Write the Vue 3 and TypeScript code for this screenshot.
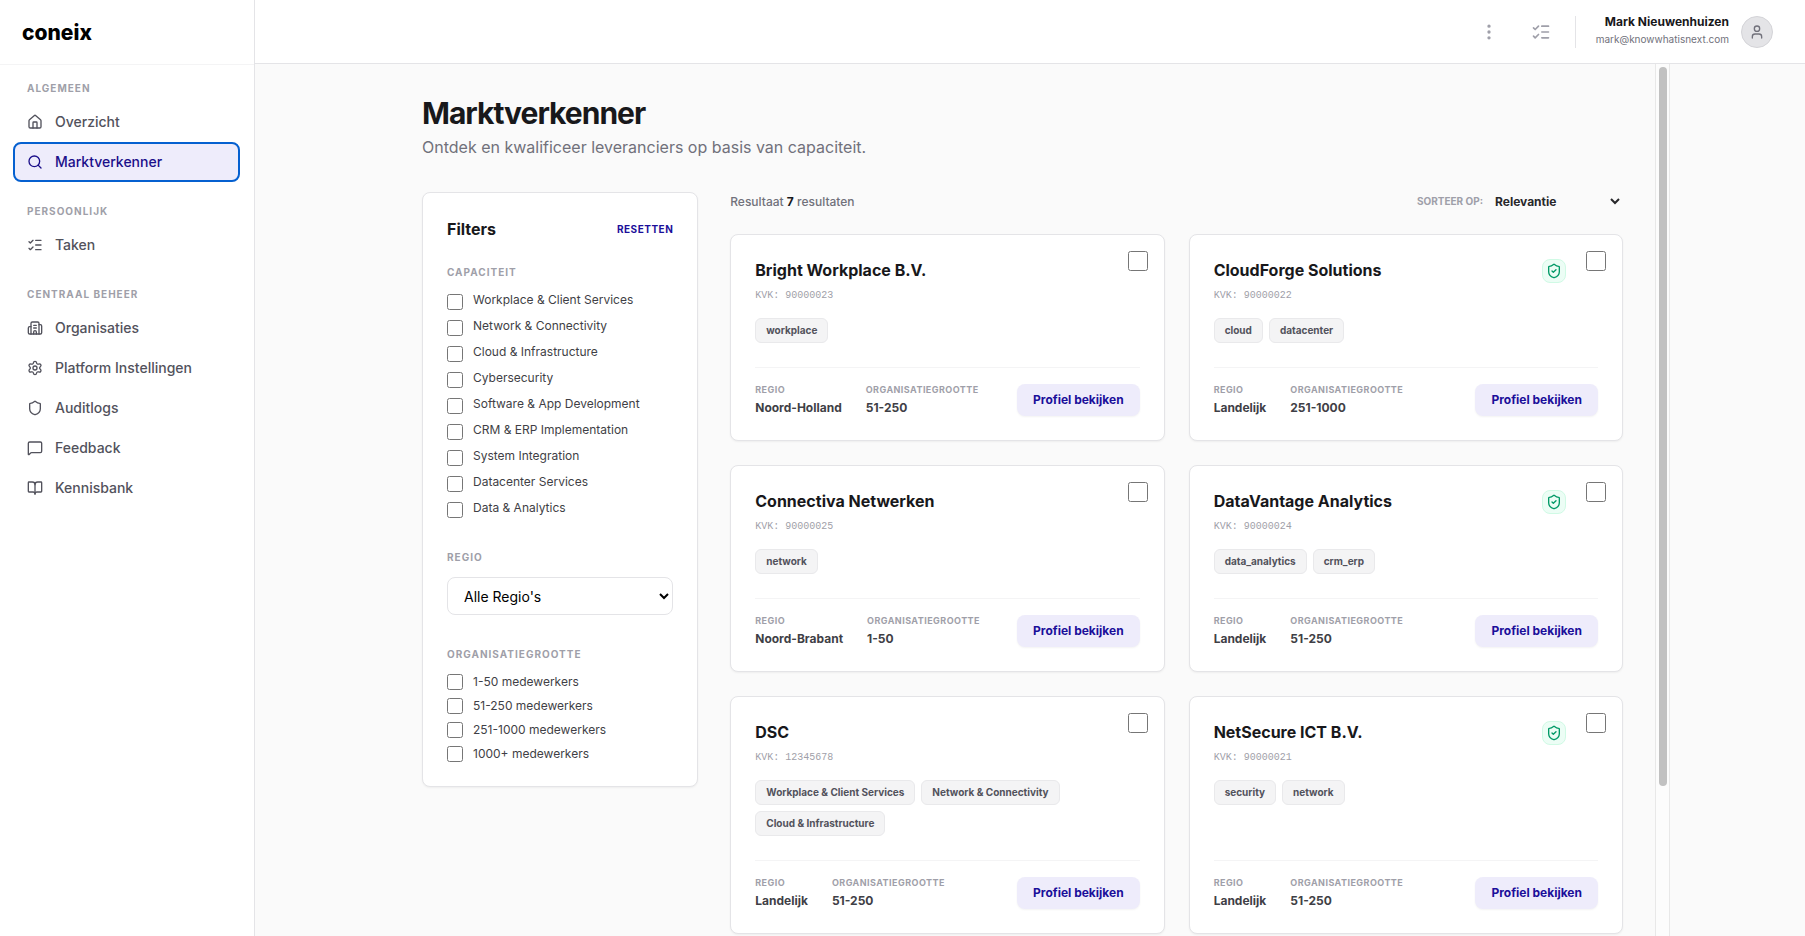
<script setup lang="ts">
import { ref } from 'vue'

type IconName =
  | 'home' | 'search' | 'tasks' | 'building' | 'settings' | 'shield'
  | 'message' | 'book' | 'user' | 'dots' | 'verified'

const shieldPath =
  'M20 13c0 5-3.5 7.5-7.66 8.95a1 1 0 0 1-.67-.01C7.5 20.5 4 18 4 13V6a1 1 0 0 1 1-1c2 0 4.5-1.2 6.24-2.72a1.17 1.17 0 0 1 1.52 0C14.51 3.81 17 5 19 5a1 1 0 0 1 1 1z'

const icons: Record<IconName, string[]> = {
  home: [
    'M15 21v-8a1 1 0 0 0-1-1h-4a1 1 0 0 0-1 1v8',
    'M3 10a2 2 0 0 1 .709-1.528l7-6a2 2 0 0 1 2.582 0l7 6A2 2 0 0 1 21 10v9a2 2 0 0 1-2 2H5a2 2 0 0 1-2-2z',
  ],
  search: ['M19 11a8 8 0 1 1-16 0a8 8 0 1 1 16 0', 'm21 21-4.34-4.34'],
  tasks: ['M13 5h8', 'M13 12h8', 'M13 19h8', 'm3 17 2 2 4-4', 'm3 7 2 2 4-4'],
  building: [
    'M10 12h4',
    'M10 8h4',
    'M14 21v-3a2 2 0 0 0-4 0v3',
    'M6 10H4a2 2 0 0 0-2 2v7a2 2 0 0 0 2 2h16a2 2 0 0 0 2-2V9a2 2 0 0 0-2-2h-2',
    'M6 21V5a2 2 0 0 1 2-2h8a2 2 0 0 1 2 2v16',
  ],
  settings: [
    'M9.671 4.136a2.34 2.34 0 0 1 4.659 0 2.34 2.34 0 0 0 3.319 1.915 2.34 2.34 0 0 1 2.33 4.033 2.34 2.34 0 0 0 0 3.831 2.34 2.34 0 0 1-2.33 4.033 2.34 2.34 0 0 0-3.319 1.915 2.34 2.34 0 0 1-4.659 0 2.34 2.34 0 0 0-3.32-1.915 2.34 2.34 0 0 1-2.33-4.033 2.34 2.34 0 0 0 0-3.831A2.34 2.34 0 0 1 6.35 6.051a2.34 2.34 0 0 0 3.319-1.915',
    'M15 12a3 3 0 1 1-6 0a3 3 0 1 1 6 0',
  ],
  shield: [shieldPath],
  verified: [shieldPath, 'm9 12 2 2 4-4'],
  message: [
    'M22 17a2 2 0 0 1-2 2H6.828a2 2 0 0 0-1.414.586l-2.202 2.202A.71.71 0 0 1 2 21.286V5a2 2 0 0 1 2-2h16a2 2 0 0 1 2 2z',
  ],
  book: [
    'M12 7v14',
    'M3 18a1 1 0 0 1-1-1V4a1 1 0 0 1 1-1h5a4 4 0 0 1 4 4 4 4 0 0 1 4-4h5a1 1 0 0 1 1 1v13a1 1 0 0 1-1 1h-6a3 3 0 0 0-3 3 3 3 0 0 0-3-3z',
  ],
  user: ['M19 21v-2a4 4 0 0 0-4-4H9a4 4 0 0 0-4 4v2', 'M16 7a4 4 0 1 1-8 0a4 4 0 1 1 8 0'],
  dots: [
    'M13 5a1 1 0 1 1-2 0a1 1 0 1 1 2 0',
    'M13 12a1 1 0 1 1-2 0a1 1 0 1 1 2 0',
    'M13 19a1 1 0 1 1-2 0a1 1 0 1 1 2 0',
  ],
}

interface NavItem { label: string; icon: IconName }
const navGroups: { title: string; items: NavItem[] }[] = [
  {
    title: 'Algemeen',
    items: [
      { label: 'Overzicht', icon: 'home' },
      { label: 'Marktverkenner', icon: 'search' },
    ],
  },
  { title: 'Persoonlijk', items: [{ label: 'Taken', icon: 'tasks' }] },
  {
    title: 'Centraal beheer',
    items: [
      { label: 'Organisaties', icon: 'building' },
      { label: 'Platform Instellingen', icon: 'settings' },
      { label: 'Auditlogs', icon: 'shield' },
      { label: 'Feedback', icon: 'message' },
      { label: 'Kennisbank', icon: 'book' },
    ],
  },
]
const activeItem = ref('Marktverkenner')

const capabilities = [
  'Workplace & Client Services',
  'Network & Connectivity',
  'Cloud & Infrastructure',
  'Cybersecurity',
  'Software & App Development',
  'CRM & ERP Implementation',
  'System Integration',
  'Datacenter Services',
  'Data & Analytics',
]
const sizes = ['1-50', '51-250', '251-1000', '1000+']

const selectedCapabilities = ref<string[]>([])
const selectedSizes = ref<string[]>([])
const selectedSuppliers = ref<string[]>([])
const total = 7

function resetFilters() {
  selectedCapabilities.value = []
  selectedSizes.value = []
}

interface Supplier {
  name: string
  kvk: string
  verified: boolean
  tags: string[]
  region: string
  size: string
}
const suppliers: Supplier[] = [
  { name: 'Bright Workplace B.V.', kvk: '90000023', verified: false, tags: ['workplace'], region: 'Noord-Holland', size: '51-250' },
  { name: 'CloudForge Solutions', kvk: '90000022', verified: true, tags: ['cloud', 'datacenter'], region: 'Landelijk', size: '251-1000' },
  { name: 'Connectiva Netwerken', kvk: '90000025', verified: false, tags: ['network'], region: 'Noord-Brabant', size: '1-50' },
  { name: 'DataVantage Analytics', kvk: '90000024', verified: true, tags: ['data_analytics', 'crm_erp'], region: 'Landelijk', size: '51-250' },
  { name: 'DSC', kvk: '12345678', verified: false, tags: ['Workplace & Client Services', 'Network & Connectivity', 'Cloud & Infrastructure'], region: 'Landelijk', size: '51-250' },
  { name: 'NetSecure ICT B.V.', kvk: '90000021', verified: true, tags: ['security', 'network'], region: 'Landelijk', size: '51-250' },
]
</script>

<template>
  <div class="app">
    <aside class="sidebar">
      <div class="brand">coneix</div>
      <nav class="nav">
        <section v-for="group in navGroups" :key="group.title" class="nav-group">
          <h2 class="eyebrow nav-title">{{ group.title }}</h2>
          <a
            v-for="item in group.items"
            :key="item.label"
            href="#"
            class="nav-item"
            :class="{ active: item.label === activeItem }"
            @click.prevent="activeItem = item.label"
          >
            <svg class="icon" viewBox="0 0 24 24" aria-hidden="true">
              <path v-for="d in icons[item.icon]" :key="d" :d="d" />
            </svg>
            <span>{{ item.label }}</span>
          </a>
        </section>
      </nav>
    </aside>

    <div class="main">
      <header class="topbar">
        <button class="icon-button" aria-label="Meer">
          <svg class="icon large" viewBox="0 0 24 24"><path v-for="d in icons.dots" :key="d" :d="d" /></svg>
        </button>
        <button class="icon-button" aria-label="Taken">
          <svg class="icon large" viewBox="0 0 24 24"><path v-for="d in icons.tasks" :key="d" :d="d" /></svg>
        </button>
        <div class="profile">
          <div class="profile-text">
            <strong>Mark Nieuwenhuizen</strong>
            <span>mark@knowwhatisnext.com</span>
          </div>
          <span class="avatar">
            <svg class="icon" viewBox="0 0 24 24"><path v-for="d in icons.user" :key="d" :d="d" /></svg>
          </span>
        </div>
      </header>

      <div class="viewport">
        <main class="page">
          <h1>Marktverkenner</h1>
          <p class="subtitle">Ontdek en kwalificeer leveranciers op basis van capaciteit.</p>

          <div class="columns">
            <form class="panel filters" @submit.prevent>
              <div class="filters-head">
                <h2>Filters</h2>
                <button type="button" class="reset" @click="resetFilters">Resetten</button>
              </div>
              <fieldset>
                <legend class="eyebrow">Capaciteit</legend>
                <label v-for="c in capabilities" :key="c" class="check offset">
                  <input v-model="selectedCapabilities" type="checkbox" :value="c" />
                  <span>{{ c }}</span>
                </label>
              </fieldset>
              <div class="field">
                <label class="eyebrow" for="region">Regio</label>
                <select id="region" class="region">
                  <option>Alle Regio's</option>
                </select>
              </div>
              <fieldset>
                <legend class="eyebrow">Organisatiegrootte</legend>
                <label v-for="s in sizes" :key="s" class="check">
                  <input v-model="selectedSizes" type="checkbox" :value="s" />
                  <span>{{ s }} medewerkers</span>
                </label>
              </fieldset>
            </form>

            <section class="results">
              <div class="results-bar">
                <p>Resultaat <b>{{ total }}</b> resultaten</p>
                <div class="sort">
                  <label for="sort">Sorteer op:</label>
                  <select id="sort">
                    <option>Relevantie</option>
                  </select>
                </div>
              </div>

              <div class="cards">
                <article v-for="s in suppliers" :key="s.kvk" class="panel card">
                  <input
                    v-model="selectedSuppliers"
                    class="card-check"
                    type="checkbox"
                    :value="s.kvk"
                    :aria-label="s.name"
                  />
                  <div class="card-head">
                    <div>
                      <h3>{{ s.name }}</h3>
                      <p class="kvk">KVK: {{ s.kvk }}</p>
                    </div>
                    <span v-if="s.verified" class="badge">
                      <svg class="icon" viewBox="0 0 24 24"><path v-for="d in icons.verified" :key="d" :d="d" /></svg>
                    </span>
                  </div>
                  <ul class="tags">
                    <li v-for="t in s.tags" :key="t">{{ t }}</li>
                  </ul>
                  <footer class="card-foot">
                    <dl>
                      <div>
                        <dt>Regio</dt>
                        <dd>{{ s.region }}</dd>
                      </div>
                      <div>
                        <dt>Organisatiegrootte</dt>
                        <dd>{{ s.size }}</dd>
                      </div>
                    </dl>
                    <button type="button" class="view">Profiel bekijken</button>
                  </footer>
                </article>
              </div>
            </section>
          </div>
        </main>
        <div class="scrollbar" aria-hidden="true"><div class="thumb"></div></div>
      </div>
    </div>
  </div>
</template>

<style>
body {
  margin: 0;
  overflow: hidden;
}
</style>

<style scoped>
.app,
.app * {
  box-sizing: border-box;
}
.app {
  display: flex;
  height: 100vh;
  background: #fafafa;
  color: #18181b;
  font-family: Inter, "Liberation Sans", sans-serif;
  -webkit-font-smoothing: antialiased;
}
h1, h2, h3, p, ul, dl, dd, fieldset, legend {
  margin: 0;
  padding: 0;
  border: 0;
}
button, select, input {
  font-family: inherit;
  margin: 0;
}
.icon {
  width: 16px;
  height: 16px;
  flex: none;
  fill: none;
  stroke: currentColor;
  stroke-width: 2;
  stroke-linecap: round;
  stroke-linejoin: round;
}
.icon.large {
  width: 20px;
  height: 20px;
}
.eyebrow {
  display: block;
  font-size: 10px;
  line-height: 15px;
  font-weight: 700;
  letter-spacing: 1px;
  text-transform: uppercase;
  color: #9f9fa9;
}

/* Sidebar */
.sidebar {
  flex: none;
  width: 255px;
  background: #fff;
  border-right: 1px solid #e4e4e7;
}
.brand {
  display: flex;
  align-items: center;
  height: 65px;
  padding: 0 22px;
  border-bottom: 1px solid #f4f4f5;
  font-size: 21px;
  font-weight: 800;
  color: #000;
}
.nav {
  display: flex;
  flex-direction: column;
  gap: 22px;
  padding: 16px 14px 16px 13px;
}
.nav-title {
  margin: 0 0 6px;
  padding: 0 14px;
}
.nav-item {
  display: flex;
  align-items: center;
  gap: 12px;
  height: 40px;
  padding: 0 12px;
  border: 2px solid transparent;
  border-radius: 8px;
  font-size: 14px;
  font-weight: 500;
  color: #52525c;
  text-decoration: none;
}
.nav-item span {
  padding-bottom: 2px;
}
.nav-item.active {
  border-color: #0560d0;
  background: #eeecfb;
  color: #1b0f8a;
}

/* Top bar */
.main {
  flex: 1;
  min-width: 0;
  display: flex;
  flex-direction: column;
}
.topbar {
  flex: none;
  display: flex;
  align-items: center;
  justify-content: flex-end;
  gap: 16px;
  height: 64px;
  padding-right: 32px;
  background: #fff;
  border-bottom: 1px solid #e4e4e7;
}
.icon-button {
  display: flex;
  padding: 8px;
  border: 0;
  background: none;
  color: #9f9fa9;
}
.profile {
  display: flex;
  align-items: center;
  gap: 12px;
  height: 32px;
  padding-left: 20px;
  border-left: 1px solid #e4e4e7;
}
.profile-text {
  display: flex;
  flex-direction: column;
  align-items: flex-end;
  gap: 2px;
  padding-bottom: 2px;
}
.profile-text strong {
  font-size: 12px;
  line-height: 16px;
  font-weight: 700;
}
.profile-text span {
  font-size: 10px;
  line-height: 15px;
  color: #71717b;
}
.avatar {
  display: flex;
  align-items: center;
  justify-content: center;
  width: 32px;
  height: 32px;
  border: 1px solid #d4d4d8;
  border-radius: 50%;
  background: #e4e4e7;
  color: #71717b;
}

/* Page */
.viewport {
  flex: 1;
  min-height: 0;
  display: flex;
  width: 100%;
  max-width: 1280px;
  margin: 0 auto;
}
.page {
  flex: 1;
  min-width: 0;
  overflow: hidden;
  padding: 32px;
}
.scrollbar {
  flex: none;
  width: 15px;
  padding: 3px 2px;
  background: #fcfcfc;
  border: solid #e8e8e8;
  border-width: 0 1px;
}
.thumb {
  width: 8px;
  height: 83%;
  margin: 0 auto;
  border-radius: 4px;
  background: #c1c1c1;
}
h1 {
  font-size: 30px;
  line-height: 34px;
  font-weight: 700;
  letter-spacing: -1px;
}
.subtitle {
  margin-top: 5px;
  font-size: 16px;
  line-height: 24px;
  color: #71717b;
}
.columns {
  display: grid;
  grid-template-columns: repeat(4, minmax(0, 1fr));
  gap: 32px;
  align-items: start;
  margin-top: 33px;
}
.panel {
  padding: 24px;
  background: #fff;
  border: 1px solid #e4e4e7;
  border-radius: 8px;
  box-shadow: 0 1px 2px rgba(0, 0, 0, 0.05);
}

/* Filters */
.filters {
  display: flex;
  flex-direction: column;
  gap: 32px;
}
.filters-head {
  display: flex;
  align-items: center;
  justify-content: space-between;
  margin-bottom: -8px;
}
.filters-head h2 {
  font-size: 16px;
  line-height: 24px;
  font-weight: 700;
}
.reset {
  padding: 0;
  border: 0;
  background: none;
  font-size: 10px;
  line-height: 15px;
  font-weight: 700;
  letter-spacing: 0.05em;
  text-transform: uppercase;
  color: #1b0f9a;
}
.filters .eyebrow {
  margin-bottom: 12px;
}
fieldset {
  min-width: 0;
}
.check {
  display: flex;
  align-items: center;
  gap: 10px;
  font-size: 12px;
  line-height: 16px;
  color: #3f3f46;
}
.check + .check {
  margin-top: 8px;
}
.check input {
  flex: none;
  width: 16px;
  height: 16px;
}
.check.offset {
  align-items: flex-start;
}
.check.offset input {
  margin-top: 2px;
}
.region {
  display: block;
  width: 100%;
  height: 38px;
  padding: 0 0 0 12px;
  border: 1px solid #e4e4e7;
  border-radius: 8px;
  background: #fff;
  font-size: 14px;
  color: #000;
}

/* Results */
.results {
  grid-column: span 3;
}
.results-bar {
  display: flex;
  align-items: center;
  justify-content: space-between;
  height: 18px;
  margin-bottom: 24px;
  font-size: 12px;
}
.results-bar p {
  font-weight: 500;
  color: #71717b;
}
.results-bar b {
  font-weight: 700;
  color: #18181b;
}
.sort {
  display: flex;
  align-items: center;
  gap: 8px;
}
.sort label {
  font-size: 10px;
  font-weight: 700;
  text-transform: uppercase;
  color: #9f9fa9;
}
.sort select {
  width: 132px;
  padding: 0;
  border: 0;
  background: none;
  font-size: 12px;
  font-weight: 700;
  color: #27272a;
}
.cards {
  display: grid;
  grid-template-columns: repeat(2, minmax(0, 1fr));
  gap: 24px;
}
.card {
  position: relative;
  display: flex;
  flex-direction: column;
}
.card-check {
  position: absolute;
  top: 16px;
  right: 16px;
  width: 20px;
  height: 20px;
}
.card-head {
  display: flex;
  align-items: flex-start;
  justify-content: space-between;
  padding-right: 32px;
}
h3 {
  font-size: 16px;
  line-height: 22px;
  font-weight: 700;
}
.kvk {
  margin-top: 7px;
  font-family: "Liberation Mono", monospace;
  font-size: 10px;
  line-height: 15px;
  color: #9f9fa9;
}
.badge {
  display: flex;
  align-items: center;
  justify-content: center;
  width: 24px;
  height: 24px;
  border: 1px solid #d0fae5;
  border-radius: 8px;
  background: #ecfdf5;
  color: #009966;
}
.tags {
  display: flex;
  flex-wrap: wrap;
  gap: 6px;
  margin: 15px 0 24px;
  list-style: none;
}
.tags li {
  padding: 4px 10px;
  border: 1px solid #e9e9eb;
  border-radius: 6px;
  background: #f4f4f5;
  font-size: 10px;
  line-height: 15px;
  font-weight: 700;
  color: #52525c;
}
.card-foot {
  display: flex;
  align-items: center;
  justify-content: space-between;
  margin-top: auto;
  padding-top: 16px;
  border-top: 1px solid #f4f4f5;
}
dl {
  display: flex;
  gap: 24px;
}
dt {
  font-size: 9px;
  line-height: 12px;
  font-weight: 700;
  letter-spacing: 0.05em;
  text-transform: uppercase;
  color: #9f9fa9;
}
dd {
  margin-top: 4px;
  font-size: 12px;
  line-height: 16px;
  font-weight: 700;
  color: #3f3f46;
}
.view {
  height: 32px;
  padding: 0 16px 2px;
  border: 0;
  border-radius: 8px;
  background: #eeecfb;
  box-shadow: 0 1px 2px rgba(0, 0, 0, 0.05);
  font-size: 12px;
  font-weight: 700;
  color: #1b0f9a;
}
</style>
